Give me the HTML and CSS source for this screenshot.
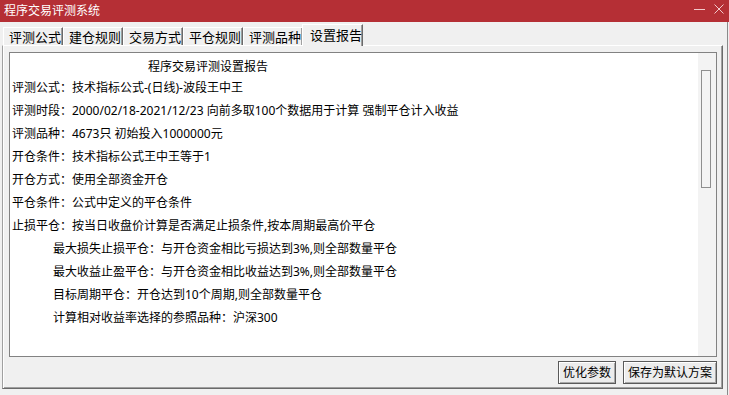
FILE: index.html
```html
<!DOCTYPE html>
<html lang="zh-CN">
<head>
    <meta charset="UTF-8">
    <title>程序交易评测系统</title>
    <link rel="stylesheet" href="styles.css">
</head>
<body>

    <div class="window">
        <div class="titlebar">
            <span class="title">程序交易评测系统</span>
            <div class="controls">
                <span class="min"></span>
                <svg class="close" width="10" height="10" viewBox="0 0 10 10">
                    <path d="M0.5 0.5 L9.5 9.5 M9.5 0.5 L0.5 9.5" stroke="#f2c9cb" stroke-width="1" fill="none"/>
                </svg>
            </div>
        </div>

        <div class="frame">
            <div class="tabs">
                <div class="tab">评测公式</div>
                <div class="tab">建仓规则</div>
                <div class="tab">交易方式</div>
                <div class="tab">平仓规则</div>
                <div class="tab">评测品种</div>
                <div class="tab active">设置报告</div>
            </div>

            <div class="pane">
                <div class="report">
                    <div class="lines">
                        <div class="heading">程序交易评测设置报告</div>
                        <div class="line">评测公式：技术指标公式-(日线)-波段王中王</div>
                        <div class="line">评测时段：2000/02/18-2021/12/23 向前多取100个数据用于计算 强制平仓计入收益</div>
                        <div class="line">评测品种：4673只 初始投入1000000元</div>
                        <div class="line">开仓条件：技术指标公式王中王等于1</div>
                        <div class="line">开仓方式：使用全部资金开仓</div>
                        <div class="line">平仓条件：公式中定义的平仓条件</div>
                        <div class="line">止损平仓：按当日收盘价计算是否满足止损条件,按本周期最高价平仓</div>
                        <div class="line sub">最大损失止损平仓：与开仓资金相比亏损达到3%,则全部数量平仓</div>
                        <div class="line sub">最大收益止盈平仓：与开仓资金相比收益达到3%,则全部数量平仓</div>
                        <div class="line sub">目标周期平仓：开仓达到10个周期,则全部数量平仓</div>
                        <div class="line sub">计算相对收益率选择的参照品种：沪深300</div>
                    </div>
                    <div class="scrollbar">
                        <div class="thumb"></div>
                    </div>
                </div>

                <div class="actions">
                    <button type="button">优化参数</button>
                    <button type="button">保存为默认方案</button>
                </div>
            </div>
        </div>
    </div>

</body>
</html>
```

FILE: styles.css
```css
* {
    box-sizing: border-box;
}
body {
    margin: 0;
    background: #f0f0f0;
    font-family: "Noto Sans", "Noto Sans CJK SC", sans-serif;
    font-size: 12px;
    color: #000;
}
.window {
    width: 729px;
    height: 395px;
    background: #f0f0f0;
    overflow: hidden;
}

/* title bar */
.titlebar {
    height: 22px;
    background: #b52f35;
    display: flex;
    justify-content: space-between;
    align-items: flex-start;
}
.title {
    color: #fff;
    line-height: 22px;
    padding-left: 4px;
}
.controls {
    display: flex;
    align-items: center;
    gap: 9px;
    height: 10px;
    margin-top: 4px;
    padding-right: 5px;
}
.min {
    width: 11px;
    height: 1px;
    background: #f2c9cb;
}

/* tabs + pane */
.frame {
    width: 728px;
    height: 373px;
    border-right: 1px solid #8a8a8a;
}
.tabs {
    display: flex;
    align-items: flex-end;
    height: 23px;
    padding-left: 3px;
}
.tab {
    width: 60px;
    height: 18px;
    padding-left: 5px;
    font-size: 13px;
    line-height: 18px;
    background: #f0f0f0;
    border-top: 1px solid #fff;
    border-left: 1px solid #fff;
    border-right: 1px solid #6a6a6a;
    box-shadow: inset -1px 0 #a0a0a0;
    white-space: nowrap;
}
.tab.active {
    width: 61px;
    height: 22px;
    margin-left: -1px;
    margin-bottom: -1px;
    padding-left: 7px;
    line-height: 20px;
    position: relative;
    z-index: 1;
}

.pane {
    width: 721px;
    height: 344px;
    margin-left: 2px;
    padding: 6px 5px 4px 6px;
    border-top: 1px solid #fff;
    border-left: 1px solid #a0a0a0;
    border-right: 1px solid #6a6a6a;
    border-bottom: 1px solid #6a6a6a;
    box-shadow: inset 1px 0 #fff, inset -1px -1px #a0a0a0;
}

/* report box */
.report {
    width: 708px;
    height: 305px;
    background: #fff;
    border: 1px solid #828282;
    display: flex;
}
.lines {
    flex: 1;
    padding: 4px 0 0 2px;
}
.heading {
    line-height: 19px;
    padding-left: 136px;
}
.line {
    line-height: 23px;
    white-space: nowrap;
}
.line.sub {
    padding-left: 41px;
}
.scrollbar {
    width: 18px;
    background: #f3f3f3;
    padding: 17px 0 0 3px;
}
.thumb {
    width: 10px;
    height: 118px;
    border: 1px solid #8e8e8e;
    background: #f3f3f3;
}

/* buttons */
.actions {
    display: flex;
    justify-content: flex-end;
    gap: 7px;
    margin-top: 4px;
}
.actions button {
    height: 23px;
    padding: 0 4px;
    font-family: "Noto Sans", "Noto Sans CJK SC", sans-serif;
    font-size: 12px;
    line-height: 20px;
    color: #000;
    background: #ececec;
    border: 1px solid #5a5a5a;
    border-radius: 0;
    box-shadow: inset 1px 1px #fff, inset -1px -1px #a8a8a8;
}
```
